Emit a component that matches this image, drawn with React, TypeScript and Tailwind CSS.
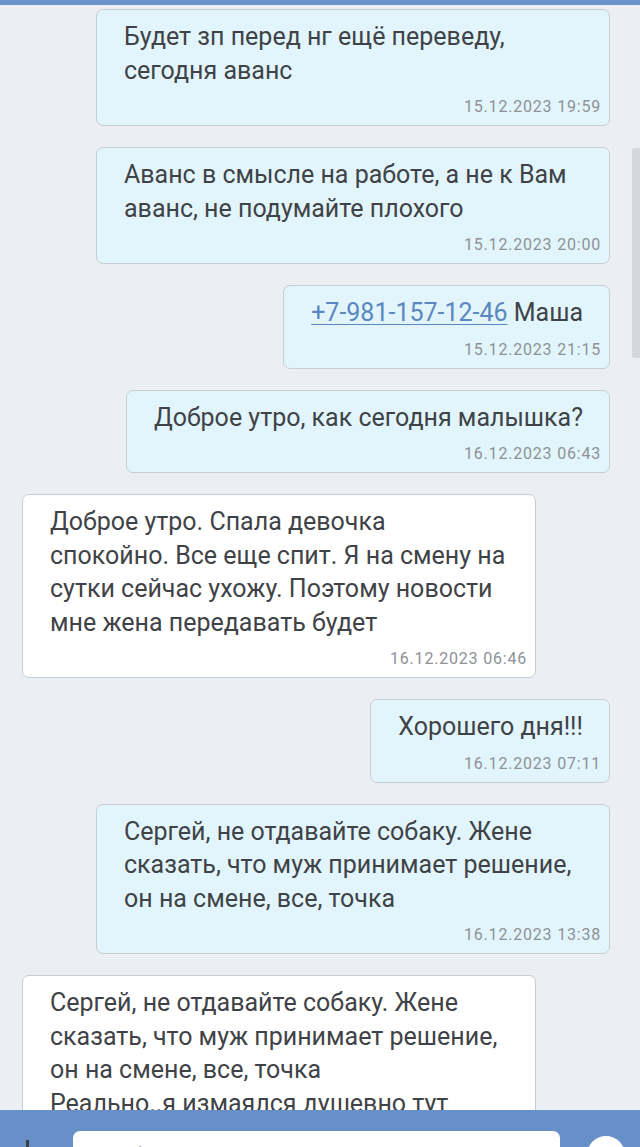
import React from "react";

type Msg = {
  out: boolean;
  lines: React.ReactNode;
  time: string;
};

const messages: Msg[] = [
  { out: true, lines: "Будет зп перед нг ещё переведу, сегодня аванс", time: "15.12.2023 19:59" },
  { out: true, lines: "Аванс в смысле на работе, а не к Вам аванс, не подумайте плохого", time: "15.12.2023 20:00" },
  {
    out: true,
    lines: (
      <>
        <span className="text-[#5b87bf] underline underline-offset-[3px] decoration-1">+7-981-157-12-46</span> Маша
      </>
    ),
    time: "15.12.2023 21:15",
  },
  { out: true, lines: "Доброе утро, как сегодня малышка?", time: "16.12.2023 06:43" },
  {
    out: false,
    lines: "Доброе утро. Спала девочка спокойно. Все еще спит. Я на смену на сутки сейчас ухожу. Поэтому новости мне жена передавать будет",
    time: "16.12.2023 06:46",
  },
  { out: true, lines: "Хорошего дня!!!", time: "16.12.2023 07:11" },
  {
    out: true,
    lines: "Сергей, не отдавайте собаку. Жене сказать, что муж принимает решение, он на смене, все, точка",
    time: "16.12.2023 13:38",
  },
  {
    out: false,
    lines: (
      <>
        Сергей, не отдавайте собаку. Жене сказать, что муж принимает решение, он на смене, все, точка
        <br />
        Реально..я измаялся душевно тут
      </>
    ),
    time: "16.12.2023 13:40",
  },
];

function Bubble({ m }: { m: Msg }) {
  return (
    <div
      className={`max-w-[514px] rounded-[7px] border-[1.5px] border-[#c8cdd2] pt-[10px] pb-[8px] ${
        m.out ? "self-end mr-[30px] bg-[#e2f5fc]" : "self-start ml-[22px] bg-white"
      }`}
    >
      <p className="pl-[27px] pr-[26px] text-[25px] leading-[33.5px] text-[#3f4347]">{m.lines}</p>
      <p className="mt-[10px] pr-[8px] text-right text-[16px] leading-[20px] tracking-[0.8px] text-[#8e9195]">{m.time}</p>
    </div>
  );
}

export default function App() {
  return (
    <div className="relative h-[1147px] w-[640px] overflow-hidden bg-[#ebeef3] font-['Roboto','Liberation_Sans',sans-serif]">
      {/* top edge of header */}
      <div className="h-[5px] bg-[#6a93c9]" />

      <div className="flex flex-col gap-[21px] pt-[4px]">
        {messages.map((m, i) => (
          <Bubble key={i} m={m} />
        ))}
      </div>

      {/* scrollbar */}
      <div className="absolute right-0 top-[148px] h-[210px] w-[8px] rounded-l-[3px] bg-[#d4d8dd]" />

      {/* bottom composer */}
      <div className="absolute bottom-0 left-0 right-0 flex h-[37px] items-start bg-[#6790c8]">
        <div className="ml-[26px] mt-[30px] h-[7px] w-[3px] bg-[#3c4148]" />
        <div className="ml-[44px] mt-[21px] h-[40px] w-[487px] rounded-[7px] bg-white pl-[18px] pt-[8px] text-[22px] text-[#9a9da1]">
          Сообщение
        </div>
        <div className="ml-[27px] mt-[26px] h-[38px] w-[38px] rounded-full bg-white" />
      </div>
    </div>
  );
}
